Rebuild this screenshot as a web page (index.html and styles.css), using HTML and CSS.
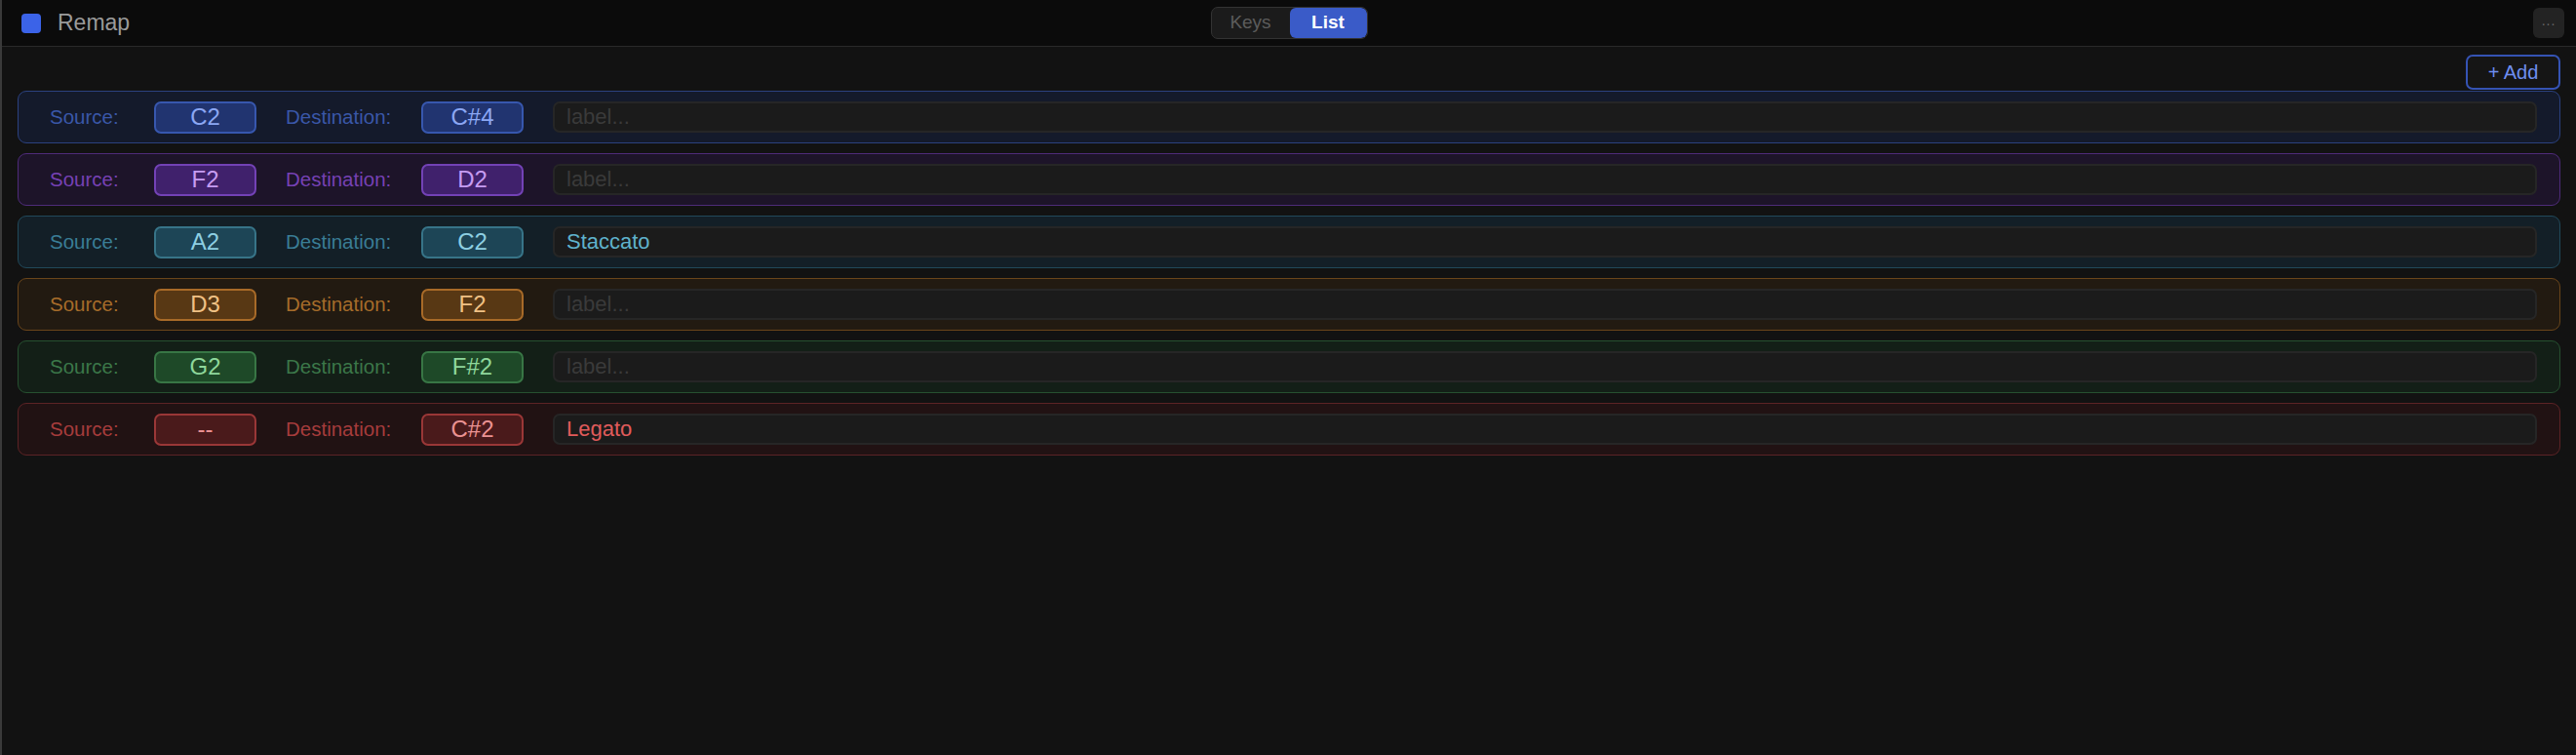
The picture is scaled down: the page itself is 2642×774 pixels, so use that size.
FILE: index.html
```html
<!DOCTYPE html>
<html lang="en">
<head>
    <meta charset="UTF-8">
    <meta name="viewport" content="width=device-width, initial-scale=1.0">
    <title>Remap</title>
    <link rel="stylesheet" href="styles.css">
</head>
<body>

    <div class="app">
        <header class="topbar">
            <div class="title">
                <span class="title-dot"></span>
                <span class="title-text">Remap</span>
            </div>
            <div class="segmented">
                <button class="seg">Keys</button>
                <button class="seg seg-active">List</button>
            </div>
            <button class="more">...</button>
        </header>

        <main class="content">
            <div class="toolbar">
                <button class="add-button">+ Add</button>
            </div>

            <div class="rows">
                <div class="row row-blue">
                    <span class="row-label label-source">Source:</span>
                    <span class="pill">C2</span>
                    <span class="row-label label-dest">Destination:</span>
                    <span class="pill">C#4</span>
                    <input class="row-input" type="text" placeholder="label...">
                </div>
                <div class="row row-purple">
                    <span class="row-label label-source">Source:</span>
                    <span class="pill">F2</span>
                    <span class="row-label label-dest">Destination:</span>
                    <span class="pill">D2</span>
                    <input class="row-input" type="text" placeholder="label...">
                </div>
                <div class="row row-teal">
                    <span class="row-label label-source">Source:</span>
                    <span class="pill">A2</span>
                    <span class="row-label label-dest">Destination:</span>
                    <span class="pill">C2</span>
                    <input class="row-input" type="text" placeholder="label..." value="Staccato">
                </div>
                <div class="row row-orange">
                    <span class="row-label label-source">Source:</span>
                    <span class="pill">D3</span>
                    <span class="row-label label-dest">Destination:</span>
                    <span class="pill">F2</span>
                    <input class="row-input" type="text" placeholder="label...">
                </div>
                <div class="row row-green">
                    <span class="row-label label-source">Source:</span>
                    <span class="pill">G2</span>
                    <span class="row-label label-dest">Destination:</span>
                    <span class="pill">F#2</span>
                    <input class="row-input" type="text" placeholder="label...">
                </div>
                <div class="row row-red">
                    <span class="row-label label-source">Source:</span>
                    <span class="pill">--</span>
                    <span class="row-label label-dest">Destination:</span>
                    <span class="pill">C#2</span>
                    <input class="row-input" type="text" placeholder="label..." value="Legato">
                </div>
            </div>
        </main>
    </div>

</body>
</html>
```

FILE: styles.css
```css
* {
    box-sizing: border-box;
}

body {
    margin: 0;
    font-family: 'Liberation Sans', Arial, sans-serif;
    background-color: #121212;
    color: #999;
    height: 100vh;
    overflow: hidden;
}

.app {
    height: 100%;
    border-left: 2px solid #3a3a3a;
    display: flex;
    flex-direction: column;
}

/* top bar */
.topbar {
    height: 48px;
    background-color: #0b0b0b;
    border-bottom: 1px solid #2a2a2a;
    display: grid;
    grid-template-columns: 1fr auto 1fr;
    align-items: center;
    padding: 0 12px;
}

.title {
    display: flex;
    align-items: center;
    gap: 17px;
    padding-left: 8px;
}

.title-dot {
    width: 20px;
    height: 20px;
    border-radius: 4px;
    background-color: #3b63e8;
}

.title-text {
    font-size: 23px;
    color: #9a9a9a;
}

.segmented {
    display: flex;
    height: 33px;
    margin-top: -1px;
    border: 1px solid #333;
    border-radius: 7px;
    background-color: #1b1b1b;
    overflow: hidden;
}

.seg {
    border: none;
    background: none;
    font-family: inherit;
    font-size: 19px;
    color: #5c5c5c;
    width: 80px;
    padding: 0;
    cursor: pointer;
}

.seg-active {
    width: 79px;
    background-color: #3a5bc8;
    color: #fff;
    font-weight: 600;
    border-radius: 6px;
}

.more {
    justify-self: end;
    width: 32px;
    height: 31px;
    margin-top: -1px;
    border: none;
    border-radius: 6px;
    background-color: #232323;
    color: #6a6a6a;
    font-family: inherit;
    font-size: 14px;
    letter-spacing: 1px;
    padding: 0 0 4px;
    cursor: pointer;
}

/* list */
.content {
    flex: 1;
    padding: 8px 16px 16px 16px;
}

.toolbar {
    display: flex;
    justify-content: flex-end;
    margin-bottom: 1px;
}

.add-button {
    height: 36px;
    width: 97px;
    border: 2px solid #3553b4;
    border-radius: 7px;
    background-color: #151515;
    color: #6e8ef0;
    font-family: inherit;
    font-size: 20px;
    cursor: pointer;
}

.rows {
    display: flex;
    flex-direction: column;
    gap: 10px;
}

.row {
    height: 54px;
    display: flex;
    align-items: center;
    gap: 30px;
    padding: 0 23px 0 32px;
    border: 1px solid var(--row-border);
    border-radius: 9px;
    background-color: var(--row-bg);
}

.row-label {
    font-size: 20.5px;
    color: var(--label);
}

.label-source {
    width: 77px;
}

.label-dest {
    width: 109px;
}

.pill {
    width: 105px;
    height: 33px;
    display: flex;
    align-items: center;
    justify-content: center;
    border: 2px solid var(--pill-border);
    border-radius: 7px;
    background-color: var(--pill-bg);
    color: var(--pill-text);
    font-size: 24px;
}

.row-input {
    flex: 1;
    height: 32px;
    padding: 0 12px;
    border: 2px solid #262626;
    border-radius: 7px;
    background-color: #1b1b1b;
    color: var(--input-text);
    font-family: inherit;
    font-size: 22px;
    outline: none;
}

.row-input::placeholder {
    color: #3a3a3a;
}

.row-blue {
    --row-bg: #141a2b;
    --row-border: #2b417f;
    --label: #3a57a8;
    --pill-bg: #213470;
    --pill-border: #3757ae;
    --pill-text: #8ba7f4;
    --input-text: #7a96e8;
}

.row-purple {
    --row-bg: #1d1429;
    --row-border: #4e2b79;
    --label: #7641b4;
    --pill-bg: #40216c;
    --pill-border: #7342b6;
    --pill-text: #c69cf2;
    --input-text: #b68ae8;
}

.row-teal {
    --row-bg: #131f27;
    --row-border: #21495a;
    --label: #3a7d96;
    --pill-bg: #1d4556;
    --pill-border: #377488;
    --pill-text: #8dcfe2;
    --input-text: #5fb2cc;
}

.row-orange {
    --row-bg: #221a11;
    --row-border: #6a451a;
    --label: #a66c2a;
    --pill-bg: #583814;
    --pill-border: #a86a28;
    --pill-text: #f0c184;
    --input-text: #e0a060;
}

.row-green {
    --row-bg: #131f17;
    --row-border: #265030;
    --label: #3b7749;
    --pill-bg: #1e4928;
    --pill-border: #387645;
    --pill-text: #8ed79b;
    --input-text: #6cc07e;
}

.row-red {
    --row-bg: #211213;
    --row-border: #5c2325;
    --label: #a63c3c;
    --pill-bg: #4a1a1b;
    --pill-border: #9a3737;
    --pill-text: #ea9292;
    --input-text: #e05b5b;
}
```
